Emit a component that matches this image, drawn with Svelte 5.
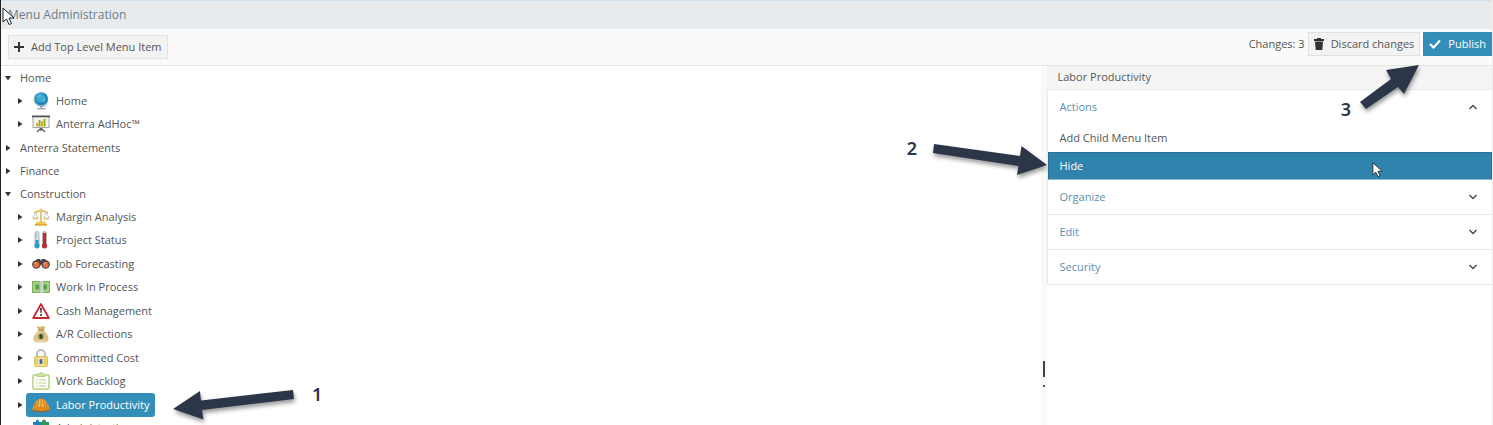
<script>
  let tree = $state([
    {
      label: "Home",
      open: true,
      children: [
        { label: "Home", icon: "globe" },
        { label: "Anterra AdHoc™", icon: "board" },
      ],
    },
    { label: "Anterra Statements", open: false, children: [] },
    { label: "Finance", open: false, children: [] },
    {
      label: "Construction",
      open: true,
      children: [
        { label: "Margin Analysis", icon: "scales" },
        { label: "Project Status", icon: "thermo" },
        { label: "Job Forecasting", icon: "binoculars" },
        { label: "Work In Process", icon: "cash" },
        { label: "Cash Management", icon: "warning" },
        { label: "A/R Collections", icon: "bag" },
        { label: "Committed Cost", icon: "lock" },
        { label: "Work Backlog", icon: "clipboard" },
        { label: "Labor Productivity", icon: "helmet" },
        { label: "Administration", icon: "puzzle" },
      ],
    },
  ]);

  let sections = $state([
    { name: "Actions", open: true, items: ["Add Child Menu Item", "Hide"] },
    { name: "Organize", open: false, items: [] },
    { name: "Edit", open: false, items: [] },
    { name: "Security", open: false, items: [] },
  ]);

  let selected = $state("Labor Productivity");
  let active = $state("Hide");
  let changes = $state(3);
</script>

{#snippet icon(name)}
  <svg class="icon" viewBox="0 0 18 18" aria-hidden="true">
    {#if name == "globe"}
      <path d="M4 2C0 7 2 14 9 14.500c3 .2 5-1 6.300-2.500" fill="none" stroke="#a9b4ba" stroke-width="1" />
      <circle cx="9.300" cy="7" r="6.800" fill="#1b86b8" />
      <circle cx="8.500" cy="5.800" r="4.800" fill="#39a5d1" />
      <path d="M5 4l3-2 2 2-2 2-2 1zM10 6l3-1 1 3-2 3-2-2z" fill="#6cc3dc" opacity=".5" />
      <path d="M8.500 14h1.500v2h-1.500z" fill="#8d979d" />
      <path d="M5 16h8.500v1.500H5z" fill="#a3abb0" />
    {:else if name == "board"}
      <path d="M9 12v4M9 13l-4 4M9 13l4 4" stroke="#5d5d5d" stroke-width="1.300" />
      <rect x="1" y="1.500" width="16" height="11" fill="#f4f3ee" stroke="#a5a5a2" />
      <rect x="0" y="0.500" width="18" height="1.800" fill="#555" />
      <path d="M4 8h2v3.500H4zM9 6h2v5.500H9z" fill="#e3a82c" />
      <path d="M6.500 5h2v6.500h-2zM11.500 4h2v7.500h-2z" fill="#91ae28" />
    {:else if name == "scales"}
      <path d="M9 2v12" stroke="#dfb94c" stroke-width="1.600" />
      <path d="M2 4.500c3 0 4-2 7-2s4 2 7 2" fill="none" stroke="#d8b550" stroke-width="1.400" />
      <circle cx="9" cy="1.800" r="1.400" fill="#f0d26c" />
      <path d="M3.500 4.500L.8 10h5.400zM14.500 4.500L11.800 10h5.400z" fill="none" stroke="#a9b7bb" stroke-width=".8" />
      <path d="M.3 10h6.400c-.7 2.500-5.700 2.500-6.400 0zM11.300 10h6.400c-.7 2.500-5.700 2.500-6.400 0z" fill="#e8d07c" />
      <path d="M5 13.500h8l2.500 4h-13z" fill="#f0c850" />
      <path d="M3 16h12v1.500H3z" fill="#d9a838" />
    {:else if name == "thermo"}
      <rect x="3" y="0.500" width="4" height="16" rx="2" fill="#dce4e7" stroke="#9aa8ad" stroke-width=".8" />
      <path d="M3.500 9h3v5h-3z" fill="#279bc2" />
      <circle cx="5" cy="14.800" r="2.600" fill="#299dc4" />
      <path d="M3.500 3h1.500M3.500 5h1.500M3.500 7h1.500" stroke="#71858d" stroke-width=".7" />
      <rect x="10.500" y="0.500" width="4" height="16" rx="2" fill="#d8d9da" stroke="#a9a0a0" stroke-width=".8" />
      <path d="M11 2h3v12h-3z" fill="#ba2c2f" />
      <circle cx="12.500" cy="14.800" r="2.600" fill="#b92f31" />
    {:else if name == "binoculars"}
      <path d="M1 9l4-5h3l1 2 1-2h3l4 5-2 4h-4L9 9l-2 4H3z" fill="#474142" />
      <circle cx="4.300" cy="9.500" r="4.200" fill="#514643" />
      <circle cx="13.700" cy="9.500" r="4.200" fill="#514643" />
      <circle cx="4.300" cy="9.700" r="3" fill="#df7144" />
      <circle cx="13.700" cy="9.700" r="3" fill="#df7144" />
      <path d="M2.500 8.500l2-1M12 8.500l2-1" stroke="#f3ad8a" />
    {:else if name == "cash"}
      <rect x="0.500" y="3.500" width="17" height="11" fill="#8ec46c" stroke="#7cb15c" />
      <rect x="2" y="5" width="14" height="8" fill="none" stroke="#b9dc98" />
      <ellipse cx="5.300" cy="9" rx="1.800" ry="2.500" fill="#579c4c" />
      <ellipse cx="13.200" cy="9" rx="1.800" ry="2.500" fill="#579c4c" />
      <path d="M8 3h3v12H8z" fill="#d4e2d0" />
      <path d="M9 3v12" stroke="#aebfaa" />
    {:else if name == "warning"}
      <path d="M9 2L16.800 16H1.200z" fill="#fff" stroke="#c52a33" stroke-width="1.800" stroke-linejoin="round" />
      <path d="M8 6h2l-.5 5h-1z" fill="#333" />
      <circle cx="9" cy="13" r="1.100" fill="#333" />
    {:else if name == "bag"}
      <path d="M4.500 1l3.500 1 2-1 3.500 1-2 4H7z" fill="#dcb878" />
      <path d="M7 5h4c3 2 5.500 6 5.500 9 0 3-2.500 3.500-7.500 3.500S1.500 17 1.500 14c0-3 2.500-7 5.500-9z" fill="#dfbe88" />
      <path d="M4 10c1-2 2-3 4-4M3.500 15c2 1.500 8 1.800 11 .5" fill="none" stroke="#f0d9ad" stroke-width="1.200" />
      <path d="M6 5h6" stroke="#b58d50" stroke-width="1.300" />
      <circle cx="9" cy="11.500" r="2.800" fill="#7e9a4f" />
      <path d="M10.500 10H8v1.500h2V13H7.500M9 9v5" fill="none" stroke="#233e22" stroke-width=".9" />
    {:else if name == "lock"}
      <path d="M5 9V5a4 4 0 0 1 8 0v4" fill="none" stroke="#b8bdbe" stroke-width="2" />
      <rect x="2.500" y="7.500" width="13" height="10" rx="1" fill="#ecd05c" stroke="#d0b04a" stroke-width=".7" />
      <path d="M3 9h12M3 16h12" stroke="#f8e698" />
      <circle cx="9" cy="12.500" r="3.200" fill="#d7dce0" />
      <path d="M10.500 11H8v1.500h2V14H7.500M9 10v5" fill="none" stroke="#364f68" stroke-width=".9" />
    {:else if name == "clipboard"}
      <rect x="1" y="3" width="16" height="14" rx="1" fill="#fff" stroke="#b5d27b" stroke-width="1.500" />
      <path d="M5 4.500V2h2.500a1.500 1.500 0 0 1 3 0H13v2.500z" fill="#cfe2a6" stroke="#acca73" stroke-width=".8" />
      <path d="M4 8h1.500M4 11h1.500M4 14h1.500M7 8h7M7 11h7M7 14h7" stroke="#b5d27b" stroke-width="1.200" />
    {:else if name == "helmet"}
      <path d="M1 13C1 7 5 3 9 3s8 4 8 10z" fill="#eba234" />
      <path d="M6.500 3.500C7.500 2 10.500 2 11.500 3.500l1 8.500h-7z" fill="#f4bb54" stroke="#a96919" stroke-width=".7" />
      <path d="M9 2.500V12M3.500 6.500C3 8 3 10 3 12M14.500 6.500c.5 1.500.5 3.500.5 5.500" stroke="#ad6b18" stroke-width=".8" fill="none" />
      <path d="M.5 12c5-1.500 12-1.500 17 0v2.500c-5 1.500-12 1.500-17 0z" fill="#dd891e" />
      <path d="M1 14.500c5 1.300 11 1.300 16 0" stroke="#8b5b24" fill="none" />
    {:else if name == "puzzle"}
      <path d="M1 3h3c-1-3 4-3 3 0h2v6h1v2H1V8c3 1 3-3 0-2z" fill="#1c83ba" />
      <path d="M8 3h2c-1-3 5-3 4 0h3v3c2-1 2 4 0 3v2H9V8c-3 1-3-3 0-2z" fill="#31965b" />
      <path d="M1 10h8v8H1z" fill="#d34b39" />
      <path d="M9 10h8v8H9z" fill="#e0ae31" />
    {/if}
  </svg>
{/snippet}

{#snippet caret(open)}
  <svg class="caret" viewBox="0 0 6 6" aria-hidden="true">
    <path d={open ? "M0 1h6L3 5.500z" : "M1 0v6l4.500-3z"} fill="#333" />
  </svg>
{/snippet}

{#snippet pointer()}
  <path d="M1 1v14l3.500-3 2.500 5.500 2.500-1L7 11h5z" fill="#fff" stroke="#222" stroke-width="1" />
{/snippet}

<div class="page">
  <header>
    <h1>Menu Administration</h1>
  </header>

  <div class="toolbar">
    <button class="btn add">
      <svg viewBox="0 0 10 10" width="10" height="10" aria-hidden="true">
        <path d="M4 0h2v4h4v2H6v4H4V6H0V4h4z" fill="#333" />
      </svg>
      Add Top Level Menu Item
    </button>
    <div class="right">
      <span>Changes: {changes}</span>
      <button class="btn" onclick={() => (changes = 0)}>
        <svg viewBox="0 0 10 12" width="10" height="12" aria-hidden="true">
          <path d="M3 0h4v1h3v2H0V1h3zM1 3.500h8L8.300 12H1.700z" fill="#333" />
        </svg>
        Discard changes
      </button>
      <button class="btn publish" onclick={() => (changes = 0)}>
        <svg viewBox="0 0 12 10" width="12" height="10" aria-hidden="true">
          <path d="M1 5l3.500 3.500L11 1.500" fill="none" stroke="#fff" stroke-width="2.200" />
        </svg>
        Publish
      </button>
    </div>
  </div>

  <main>
    <nav aria-label="Menu">
      <ul>
        {#each tree as group}
          <li>
            <button class="row" aria-expanded={group.open} onclick={() => (group.open = !group.open)}>
              {@render caret(group.open)}
              {group.label}
            </button>
            {#if group.open}
              <ul class="children">
                {#each group.children as child}
                  <li>
                    {@render caret(false)}
                    <button
                      class="item"
                      class:selected={selected == child.label}
                      onclick={() => (selected = child.label)}
                    >
                      {@render icon(child.icon)}
                      {child.label}
                    </button>
                  </li>
                {/each}
              </ul>
            {/if}
          </li>
        {/each}
      </ul>
    </nav>

    <div class="splitter">
      <span class="grip"></span>
      <span class="dot"></span>
    </div>

    <aside>
      <h2>{selected}</h2>
      <div class="accordion">
        {#each sections as section}
          <section>
            <button
              class="section-head"
              aria-expanded={section.open}
              onclick={() => (section.open = !section.open)}
            >
              {section.name}
              <svg viewBox="0 0 8 6" width="8" height="6" aria-hidden="true">
                <path
                  d={section.open ? "M.5 5L4 1.500 7.500 5" : "M.5 1L4 4.500 7.500 1"}
                  fill="none"
                  stroke="#444"
                  stroke-width="1.300"
                />
              </svg>
            </button>
            {#if section.open}
              {#each section.items as item}
                <button class="action" class:active={active == item} onclick={() => (active = item)}>
                  {item}
                </button>
              {/each}
            {/if}
          </section>
        {/each}
      </div>
    </aside>
  </main>

  <!-- numbered steps drawn over the page -->
  <div class="step one">
    <svg viewBox="0 0 124 32" width="124" height="32" aria-hidden="true">
      <path d="M1 20L28 2l1 9.500 92-10.500 1 9-92 11 1.500 9.500z" />
    </svg>
    <span>1</span>
  </div>
  <div class="step two">
    <span>2</span>
    <svg viewBox="0 0 116 34" width="116" height="34" aria-hidden="true">
      <path d="M2 1l86 12 1.500-10L115 22 85 32l1.500-9L1 10z" />
    </svg>
  </div>
  <div class="step three">
    <span>3</span>
    <svg viewBox="0 0 62 48" width="62" height="48" aria-hidden="true">
      <path d="M60 1L27 6l5 9L1 38l6 7 32-22 6 7z" />
    </svg>
  </div>

  <svg class="cursor corner" viewBox="0 0 13 19" aria-hidden="true">{@render pointer()}</svg>
  <svg class="cursor hover" viewBox="0 0 13 19" aria-hidden="true">{@render pointer()}</svg>
</div>

<style>
  :global(body) {
    margin: 0;
  }
  .page {
    position: relative;
    display: flex;
    flex-direction: column;
    box-sizing: border-box;
    height: 100vh;
    overflow: hidden;
    border-left: 1px solid #222;
    border-right: 1px solid #eee;
    background: #fff;
    color: #555;
    font-family: "Open Sans", sans-serif;
    font-size: 11px;
    line-height: 16px;
  }
  button {
    margin: 0;
    padding: 0;
    border: 0;
    background: none;
    color: inherit;
    font: inherit;
    text-align: left;
    white-space: nowrap;
    cursor: pointer;
  }
  ul {
    margin: 0;
    padding: 0;
    list-style: none;
  }

  header {
    padding: 5px 7px;
    border-top: 1px solid #cfe2ef;
    background: #e7ebee;
  }
  h1 {
    margin: 0;
    color: #717a86;
    font-size: 12px;
    font-weight: 400;
    line-height: 18px;
  }

  .toolbar {
    display: flex;
    justify-content: space-between;
    align-items: flex-start;
    padding: 3px 0 6px 7px;
    border-bottom: 1px solid #e5e5e5;
    background: #fafafa;
  }
  .btn {
    display: flex;
    align-items: center;
    gap: 7px;
    padding: 3px 5px;
    border: 1px solid #e2e2e2;
    background: #f3f3f3;
  }
  .add {
    margin-top: 3px;
  }
  .right {
    display: flex;
    align-items: center;
    gap: 3px;
  }
  .publish {
    border-color: #2f8bb5;
    background: #338fb9;
    color: #fff;
  }

  main {
    display: grid;
    grid-template-columns: 7fr 6px 3fr;
    flex: 1;
    min-height: 0;
  }
  nav {
    overflow: hidden;
  }
  .row {
    display: flex;
    align-items: center;
    gap: 9px;
    height: 23px;
    padding-left: 4px;
  }
  .caret {
    flex: none;
    width: 6px;
    height: 6px;
  }
  .children li {
    display: flex;
    align-items: center;
    gap: 3px;
    height: 23px;
    padding-left: 16px;
  }
  .children li:nth-child(even) {
    height: 24px;
  }
  .item {
    display: flex;
    align-items: center;
    gap: 6px;
    height: 24px;
    padding: 0 6px;
    border-radius: 3px;
  }
  .selected {
    background: #338fb9;
    color: #fff;
  }
  .icon {
    width: 18px;
    height: 18px;
  }

  .splitter {
    display: flex;
    flex-direction: column;
    align-items: center;
    justify-content: flex-end;
    gap: 8px;
    padding-bottom: 38px;
    background: #f9f9f9;
  }
  .grip {
    width: 2px;
    height: 16px;
    background: #444;
  }
  .dot {
    width: 2px;
    height: 2px;
    background: #555;
  }

  h2 {
    margin: 0;
    padding: 3px 11px 4px;
    background: #f5f5f5;
    font-size: 11px;
    font-weight: 400;
  }
  .accordion {
    border: 1px solid #e8e8e8;
    border-width: 1px 0 0 1px;
  }
  section {
    border-bottom: 1px solid #e8e8e8;
  }
  section:first-child {
    border-bottom: 0;
  }
  .section-head {
    display: flex;
    align-items: center;
    justify-content: space-between;
    width: 100%;
    padding: 9px 15px 9px 12px;
    color: #5b8fb0;
  }
  .action {
    display: block;
    box-sizing: border-box;
    width: 100%;
    padding: 5px 11px;
    border: 1px solid transparent;
  }
  .active {
    border-color: #2b7193;
    border-bottom-color: #8fbfd4;
    background: #3083ad;
    color: #fff;
  }

  .step {
    position: absolute;
    display: flex;
    pointer-events: none;
    color: #2b3648;
    font-family: "Noto Sans", sans-serif;
    font-size: 18px;
    font-weight: 600;
    line-height: 20px;
  }
  .step svg {
    overflow: visible;
    fill: #2b3648;
    filter: drop-shadow(1px 3px 2px rgba(0, 0, 0, 0.4));
  }
  .one {
    top: 389px;
    left: 171px;
    gap: 16px;
    align-items: flex-start;
  }
  .one span {
    margin-top: -5px;
  }
  .two {
    top: 143px;
    right: 444px;
    gap: 15px;
  }
  .two span {
    margin-top: -5px;
  }
  .three {
    top: 64px;
    right: 71px;
    gap: 8px;
  }
  .three span {
    margin-top: 35px;
  }

  .cursor {
    position: absolute;
    width: 13px;
    height: 19px;
    pointer-events: none;
  }
  .corner {
    top: 7px;
    left: 1px;
  }
  .hover {
    top: 162px;
    right: 109px;
    width: 11px;
    height: 16px;
  }
</style>
